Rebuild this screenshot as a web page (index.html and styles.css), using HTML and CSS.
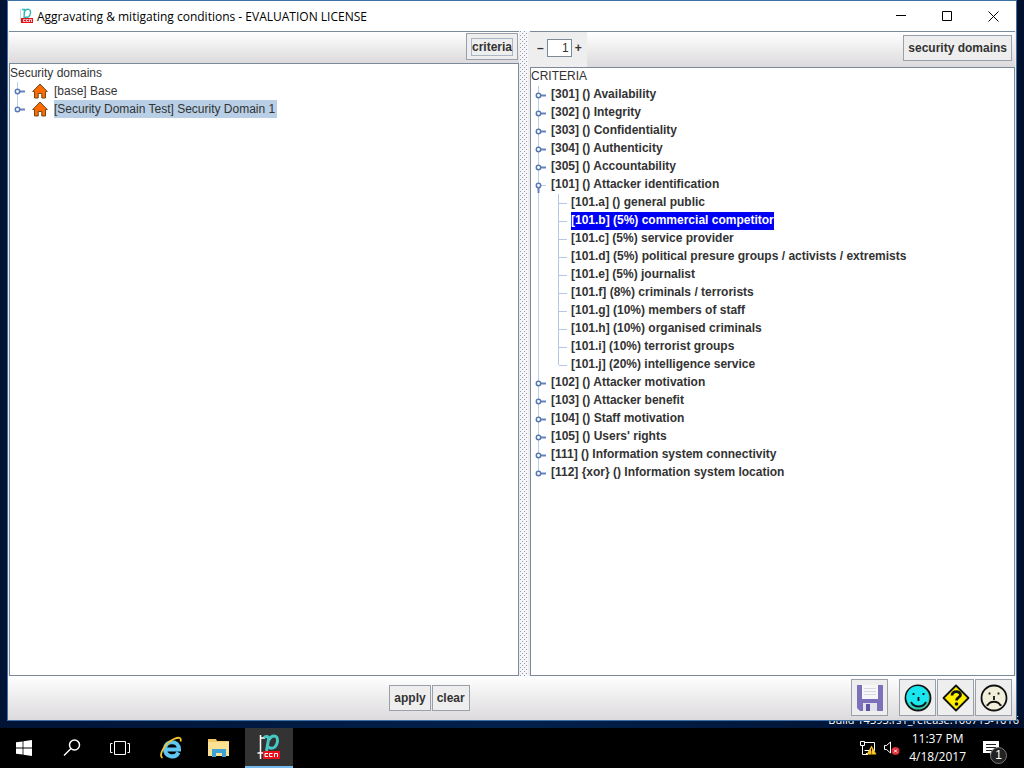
FILE: index.html
```
<!DOCTYPE html>
<html lang="en">
<head>
    <meta charset="UTF-8">
    <meta name="viewport" content="width=device-width, initial-scale=1.0">
    <title>Aggravating &amp; mitigating conditions - EVALUATION LICENSE</title>
    <link rel="stylesheet" href="styles.css">
</head>
<body>
    <!-- shared tree icons -->
    <svg class="symbols" aria-hidden="true">
        <symbol id="closed" viewBox="0 0 12 18">
            <path d="M5 9.5h6" stroke="#6382bf" stroke-width="2"/>
            <circle cx="3.5" cy="9.5" r="2.2" fill="#fff" stroke="#5878b4" stroke-width="1.5"/>
        </symbol>
        <symbol id="open" viewBox="0 0 12 18">
            <path d="M3.5 11v6" stroke="#6382bf" stroke-width="2"/>
            <path d="M6 9.5h5" stroke="#b8cfe5"/>
            <circle cx="3.5" cy="9.5" r="2.2" fill="#fff" stroke="#5878b4" stroke-width="1.5"/>
        </symbol>
        <symbol id="house" viewBox="0 0 16 16">
            <path d="M8 1L15.3 8.5H13.5V15H9.8V10.5H6.2V15H2.5V8.5H.7Z" fill="#ff6a00" stroke="#6b4a1c" stroke-width="1"/>
        </symbol>
    </svg>

    <div class="desktop">
        <div class="watermark">Build 14393.rs1_release.160715-1616</div>

        <div class="window">
            <header class="titlebar">
                <svg class="app-icon" viewBox="0 0 16 16" width="16" height="16">
                    <path d="M2.500 1v13" stroke="#b9dede" fill="none"/>
                    <path d="M4 1.500h2.500L6 11M7 3c2-3 6-2 5.500 2-.5 4-3 5-5.500 4" stroke="#35b9bb" stroke-width="1.500" fill="none"/>
                    <rect x="3" y="10" width="12" height="5" fill="#e8121c"/>
                    <path d="M7.500 11.500h-2v2h2M10.500 11.500h-2v2h2M11.500 14v-2.500h2V14" stroke="#fff" stroke-width=".8" fill="none"/>
                </svg>
                <h1 class="title">Aggravating &amp; mitigating conditions - EVALUATION LICENSE</h1>
                <button class="win-btn" aria-label="Minimize"><svg width="11" height="11"><path d="M0 4.500h10" stroke="#000"/></svg></button>
                <button class="win-btn" aria-label="Maximize"><svg width="11" height="11"><path d="M.5.500h9v9h-9z" fill="none" stroke="#000"/></svg></button>
                <button class="win-btn" aria-label="Close"><svg width="11" height="11"><path d="M.5.500l10 10M10.500.500l-10 10" stroke="#000"/></svg></button>
            </header>

            <main class="split">
                <section class="pane">
                    <div class="toolbar toolbar-left">
                        <button class="btn focused"><span>criteria</span></button>
                    </div>
                    <div class="tree-box">
                        <div class="root">Security domains</div>
                        <ul class="tree domains">
                            <li><div class="row"><button class="handle" aria-label="Expand"><svg><use href="#closed"/></svg></button><svg class="house"><use href="#house"/></svg><span class="label">[base] Base</span></div></li>
                            <li><div class="row"><button class="handle" aria-label="Expand"><svg><use href="#closed"/></svg></button><svg class="house"><use href="#house"/></svg><span class="label current">[Security Domain Test] Security Domain 1</span></div></li>
                        </ul>
                    </div>
                </section>

                <div class="divider"></div>

                <section class="pane">
                    <div class="toolbar toolbar-right">
                        <div class="level">
                            <button class="step" aria-label="Less">–</button>
                            <input class="level-input" type="text" value="1" aria-label="Level">
                            <button class="step" aria-label="More">+</button>
                        </div>
                        <button class="btn">security domains</button>
                    </div>
                    <div class="tree-box criteria-box">
                        <div class="root">CRITERIA</div>
                        <ul class="tree criteria">
                            <li><div class="row"><button class="handle" aria-label="Expand"><svg><use href="#closed"/></svg></button><span class="label">[301] () Availability</span></div></li>
                            <li><div class="row"><button class="handle" aria-label="Expand"><svg><use href="#closed"/></svg></button><span class="label">[302] () Integrity</span></div></li>
                            <li><div class="row"><button class="handle" aria-label="Expand"><svg><use href="#closed"/></svg></button><span class="label">[303] () Confidentiality</span></div></li>
                            <li><div class="row"><button class="handle" aria-label="Expand"><svg><use href="#closed"/></svg></button><span class="label">[304] () Authenticity</span></div></li>
                            <li><div class="row"><button class="handle" aria-label="Expand"><svg><use href="#closed"/></svg></button><span class="label">[305] () Accountability</span></div></li>
                            <li>
                                <div class="row"><button class="handle" aria-label="Collapse"><svg><use href="#open"/></svg></button><span class="label">[101] () Attacker identification</span></div>
                                <ul class="leaves">
                                    <li><span class="label">[101.a] () general public</span></li>
                                    <li><span class="label selected">[101.b] (5%) commercial competitor</span></li>
                                    <li><span class="label">[101.c] (5%) service provider</span></li>
                                    <li><span class="label">[101.d] (5%) political presure groups / activists / extremists</span></li>
                                    <li><span class="label">[101.e] (5%) journalist</span></li>
                                    <li><span class="label">[101.f] (8%) criminals / terrorists</span></li>
                                    <li><span class="label">[101.g] (10%) members of staff</span></li>
                                    <li><span class="label">[101.h] (10%) organised criminals</span></li>
                                    <li><span class="label">[101.i] (10%) terrorist groups</span></li>
                                    <li><span class="label">[101.j] (20%) intelligence service</span></li>
                                </ul>
                            </li>
                            <li><div class="row"><button class="handle" aria-label="Expand"><svg><use href="#closed"/></svg></button><span class="label">[102] () Attacker motivation</span></div></li>
                            <li><div class="row"><button class="handle" aria-label="Expand"><svg><use href="#closed"/></svg></button><span class="label">[103] () Attacker benefit</span></div></li>
                            <li><div class="row"><button class="handle" aria-label="Expand"><svg><use href="#closed"/></svg></button><span class="label">[104] () Staff motivation</span></div></li>
                            <li><div class="row"><button class="handle" aria-label="Expand"><svg><use href="#closed"/></svg></button><span class="label">[105] () Users' rights</span></div></li>
                            <li><div class="row"><button class="handle" aria-label="Expand"><svg><use href="#closed"/></svg></button><span class="label">[111] () Information system connectivity</span></div></li>
                            <li><div class="row"><button class="handle" aria-label="Expand"><svg><use href="#closed"/></svg></button><span class="label">[112] {xor} () Information system location</span></div></li>
                        </ul>
                    </div>
                </section>
            </main>

            <footer class="actions">
                <div class="action-group">
                    <button class="btn">apply</button>
                    <button class="btn">clear</button>
                </div>
                <div class="icon-group">
                    <button class="icon-btn save" aria-label="Save">
                        <svg viewBox="0 0 28 28" width="28" height="28">
                            <path d="M1 1h26v26H4l-3-3z" fill="#7d70bb"/>
                            <path d="M6 1h16v14H6z" fill="#f7f7f9"/>
                            <path d="M8 4.500h12M8 7.500h12M8 10.500h12" stroke="#d8d8e0"/>
                            <path d="M7 19h14v8H7z" fill="#e2e2ea"/>
                            <path d="M10 20h4v7h-4z" fill="#5f53a3"/>
                        </svg>
                    </button>
                    <button class="icon-btn" aria-label="Accept">
                        <svg viewBox="0 0 28 28" width="28" height="28">
                            <circle cx="14" cy="14" r="12.500" fill="#40c5a0" stroke="#111" stroke-width="1.800"/>
                            <circle cx="13.500" cy="13" r="11" fill="#19e6ee"/>
                            <path d="M9.500 9v2M19.500 9v2M14.500 13v4" stroke="#111" stroke-width="1.800"/>
                            <path d="M7 18c3 6 12 6 15 0" fill="none" stroke="#111" stroke-width="1.800"/>
                        </svg>
                    </button>
                    <button class="icon-btn" aria-label="Help">
                        <svg viewBox="0 0 28 28" width="28" height="28">
                            <path d="M14 1.500L26.500 14 14 26.500 1.500 14z" fill="#ffee00" stroke="#111" stroke-width="1.800" stroke-linejoin="round"/>
                            <path d="M10 11.500c0-5 8.500-5 8.500-.5 0 2.500-4 2.500-4 5.500" fill="none" stroke="#111" stroke-width="2.800"/>
                            <circle cx="14.500" cy="20" r="1.800" fill="#111"/>
                        </svg>
                    </button>
                    <button class="icon-btn" aria-label="Cancel">
                        <svg viewBox="0 0 28 28" width="28" height="28">
                            <circle cx="14" cy="14" r="12.500" fill="#f1efda" stroke="#111" stroke-width="1.800"/>
                            <path d="M9.500 8.500v2M18.500 8.500v2M14 12v4" stroke="#111" stroke-width="1.800"/>
                            <path d="M7.500 21.500c2.500-5 10.500-5 13 0M6.500 21.500l2-1M21.500 21.500l-2-1" fill="none" stroke="#111" stroke-width="1.800"/>
                        </svg>
                    </button>
                </div>
            </footer>
        </div>
    </div>

    <nav class="taskbar">
        <button class="task" aria-label="Start">
            <svg viewBox="0 0 16 16" width="16" height="16" fill="#fff"><path d="M0 2.300L6.600 1.400V7.600H0zM7.400 1.300L16 0v7.600H7.400zM0 8.400h6.600v6.200L0 13.700zM7.400 8.400H16V16l-8.600-1.200z"/></svg>
        </button>
        <button class="task" aria-label="Search">
            <svg viewBox="0 0 18 18" width="18" height="18" fill="none" stroke="#fff" stroke-width="1.500"><circle cx="11.500" cy="6" r="5"/><path d="M8 9.500L1 16.500"/></svg>
        </button>
        <button class="task" aria-label="Task view">
            <svg viewBox="0 0 20 16" width="20" height="16" fill="none" stroke="#fff"><path d="M4.500 1.500h11v13h-11zM2.500 3.500h-2v9h2M17.500 3.500h2v9h-2"/></svg>
        </button>
        <button class="task ie" aria-label="Internet Explorer">
            <svg viewBox="0 0 24 24" width="24" height="24" fill="none">
                <path d="M19.500 16.500c-3 6-13.500 5-13.500-3.500 0-9 14-9.500 14 .5H8" stroke="#5ec8f2" stroke-width="4"/>
                <path d="M3.500 22C-1 19 6 7 15 3c6-2.500 7.500-1 6.500 2.500" stroke="#f3c42e" stroke-width="1.800"/>
            </svg>
        </button>
        <button class="task" aria-label="File Explorer">
            <svg viewBox="0 0 22 20" width="22" height="20">
                <path d="M0 1h8l1 2h12v15H0z" fill="#f0c868"/>
                <path d="M0 4h21v14H0z" fill="#fbe194"/>
                <path d="M4 11h14v8h-4v-4H8v4H4z" fill="#3da2d6"/>
            </svg>
        </button>
        <button class="task active" aria-label="Risk analysis">
            <svg viewBox="0 0 26 26" width="26" height="26" fill="none">
                <path d="M4.500 1v24M1.500 19h6M5 4h4" stroke="#fff" stroke-width="1.500"/>
                <path d="M8 3.500c3-2 5-1 4.500 2L10.500 17M13 6c2-5 9-6 8.500 1-.5 6-5 9-9 6" stroke="#47c8c5" stroke-width="3"/>
                <path d="M7 17h17v8H7z" fill="#ee101b"/>
                <path d="M12 19.500H9v3h3M16.500 19.500h-3v3h3M18.500 23v-3.500h3V23" stroke="#fff"/>
            </svg>
        </button>
        <div class="tray">
            <svg viewBox="0 0 18 16" width="18" height="16" fill="none">
                <path d="M5.500 2.500h10v8h-10M1.500 1.500h4v4h-4zM3.500 6v8.500H9M7 13.500h3" stroke="#fff"/>
                <path d="M12.500 5.500l5 9h-10z" fill="#f9c523"/><path d="M12.500 8.500v3M12.500 12.500v1" stroke="#222"/>
            </svg>
            <svg class="sound" viewBox="0 0 18 16" width="18" height="16" fill="none">
                <path d="M1.500 5.500h2L7.500 2v11l-4-3.500h-2z" stroke="#fff"/>
                <circle cx="12.500" cy="11" r="4" fill="#df2935"/><path d="M11 9.500l3 3M14 9.500l-3 3" stroke="#fff"/>
            </svg>
            <div class="clock"><div>11:37 PM</div><div>4/18/2017</div></div>
            <div class="notify">
                <svg viewBox="0 0 18 17" width="18" height="17"><path d="M1 1h16v12h-6l-3 3v-3H1z" fill="#fff"/><path d="M4 4.500h10M4 7.500h10M4 10.500h6" stroke="#222"/></svg>
                <span class="badge">1</span>
            </div>
        </div>
    </nav>
</body>
</html>
```
FILE: styles.css
```
* {
    box-sizing: border-box;
}

body {
    margin: 0;
    height: 100vh;
    display: flex;
    flex-direction: column;
    overflow: hidden;
    background: #000;
    color: #333;
    font-family: "Liberation Sans", Arial, sans-serif;
    font-size: 12px;
}

button {
    font: inherit;
    color: inherit;
    padding: 0;
    border: none;
    background: none;
}

svg {
    display: block;
    flex: none;
}

ul {
    list-style: none;
    margin: 0;
    padding: 0;
}

.symbols {
    position: absolute;
    width: 0;
    height: 0;
}

.desktop {
    position: relative;
    flex: 1;
    min-height: 0;
    padding: 0 7px 7px;
    background: linear-gradient(90deg, #001335, #00204b 50%, #000f2c);
}

.watermark {
    position: absolute;
    right: 5px;
    bottom: 0;
    color: #fff;
    font-family: "Open Sans", sans-serif;
    font-size: 11px;
    line-height: 16px;
}

/* application window */
.window {
    position: relative;
    height: 100%;
    display: flex;
    flex-direction: column;
    border: 1px solid #3c72a8;
    background: #eee;
}

.titlebar {
    display: flex;
    align-items: center;
    height: 30px;
    padding-left: 10px;
    background: #fff;
}

.title {
    flex: 1;
    margin: 0 0 0 3px;
    color: #000;
    font-family: "Open Sans", sans-serif;
    font-size: 12px;
    font-weight: normal;
}

.win-btn {
    width: 46px;
    height: 29px;
    display: flex;
    align-items: center;
    justify-content: center;
}

.split {
    flex: 1;
    min-height: 0;
    display: flex;
    padding: 0 1px;
}

.pane {
    flex: 510 1 0;
    min-width: 0;
    display: flex;
    flex-direction: column;
    border-top: 1px solid #7a8a99;
}

.pane:last-child {
    flex-grow: 485;
}

.divider {
    width: 11px;
    border: solid #eee;
    border-width: 0 2px 0 1px;
    background: conic-gradient(at 1px 1px, transparent 75%, #8f9aac 0) 0 0 / 4px 4px,
                conic-gradient(at 1px 1px, transparent 75%, #8f9aac 0) 2px 2px / 4px 4px,
                #f6f6f8;
}

.toolbar {
    display: flex;
    justify-content: flex-end;
    background: linear-gradient(#fff, #dcdadc);
}

.toolbar-left {
    height: 31px;
    padding: 1px 1px 3px;
}

.toolbar-right {
    height: 35px;
    padding: 3px 3px 6px 0;
}

.btn {
    padding: 0 4px;
    border: 1px solid #99a0aa;
    background: #eee;
    font-weight: bold;
}

.focused span {
    display: block;
    border: 1px solid #a9b6c6;
    line-height: 16px;
}

.level {
    display: flex;
    align-items: center;
    gap: 3px;
    margin: -3px auto -6px 0;
    padding: 0 5px 3px 7px;
    background: #eee;
    font-weight: bold;
}

.level-input {
    width: 25px;
    height: 18px;
    padding: 0 2px;
    border: 1px solid #7a8a99;
    background: #fff;
    color: #333;
    font: inherit;
    font-weight: normal;
    text-align: right;
}

/* trees */
.tree-box {
    flex: 1;
    min-height: 0;
    overflow: hidden;
    border: 1px solid #7a8a99;
    background: #fff;
    line-height: 19px;
    white-space: nowrap;
}

.criteria-box {
    line-height: 16px;
}

.root {
    height: 18px;
}

.tree li {
    background: linear-gradient(#b8cfe5, #b8cfe5) 7px 0 / 1px 100% no-repeat;
}

.tree li:last-child {
    background-size: 1px 9px;
}

.row {
    display: flex;
    height: 18px;
    padding-left: 4px;
}

.handle,
.handle svg {
    width: 12px;
    height: 18px;
}

.handle {
    margin-right: 4px;
}

.domains .handle {
    margin-right: 6px;
}

.house {
    width: 16px;
    height: 16px;
    margin: 1px 6px 0 0;
}

.criteria {
    font-weight: bold;
}

.leaves {
    margin-left: 20px;
}

.leaves li {
    display: flex;
    height: 18px;
    padding-left: 20px;
    background: linear-gradient(#b8c6e5, #b8c6e5) 7px 0 / 1px 100% no-repeat,
                linear-gradient(#b8c6e5, #b8c6e5) 8px 9px / 8px 1px no-repeat;
}

.leaves li:last-child {
    background-size: 1px 9px, 8px 1px;
}

.current {
    padding-right: 2px;
    background: #b8cfe5;
}

.selected {
    background: #0000f5;
    color: #fff;
}

/* bottom buttons */
.actions {
    height: 44px;
    display: flex;
    align-items: center;
    justify-content: flex-end;
    padding-right: 4px;
    background: linear-gradient(#fff, #dcdadc);
}

.action-group {
    flex: 1;
    display: flex;
    justify-content: center;
    gap: 1px;
}

.action-group .btn {
    height: 26px;
}

.icon-group {
    display: flex;
    gap: 1px;
    margin-bottom: 1px;
}

.icon-btn {
    width: 37px;
    height: 37px;
    display: flex;
    align-items: center;
    justify-content: center;
    border: 1px solid #99a0aa;
    background: #eee;
}

.save {
    margin-right: 10px;
}

/* taskbar */
.taskbar {
    flex: none;
    height: 40px;
    display: flex;
    background: #000;
    color: #fff;
}

.task {
    width: 48px;
    display: flex;
    align-items: center;
    justify-content: center;
}

.ie {
    margin-left: 3px;
}

.active {
    margin-left: 2px;
    border-bottom: 2px solid #76b9ed;
    background: #333;
}

.tray {
    flex: 1;
    display: flex;
    align-items: center;
    justify-content: flex-end;
    padding-right: 17px;
}

.sound {
    margin-left: 6px;
}

.clock {
    margin: 0 16px 0 8px;
    font-family: "Open Sans", sans-serif;
    line-height: 18px;
    text-align: center;
}

.notify {
    position: relative;
    padding-right: 7px;
}

.badge {
    position: absolute;
    right: 0;
    bottom: -7px;
    width: 17px;
    height: 17px;
    border: 1px solid #777;
    border-radius: 50%;
    background: #222;
    line-height: 15px;
    text-align: center;
}
```
